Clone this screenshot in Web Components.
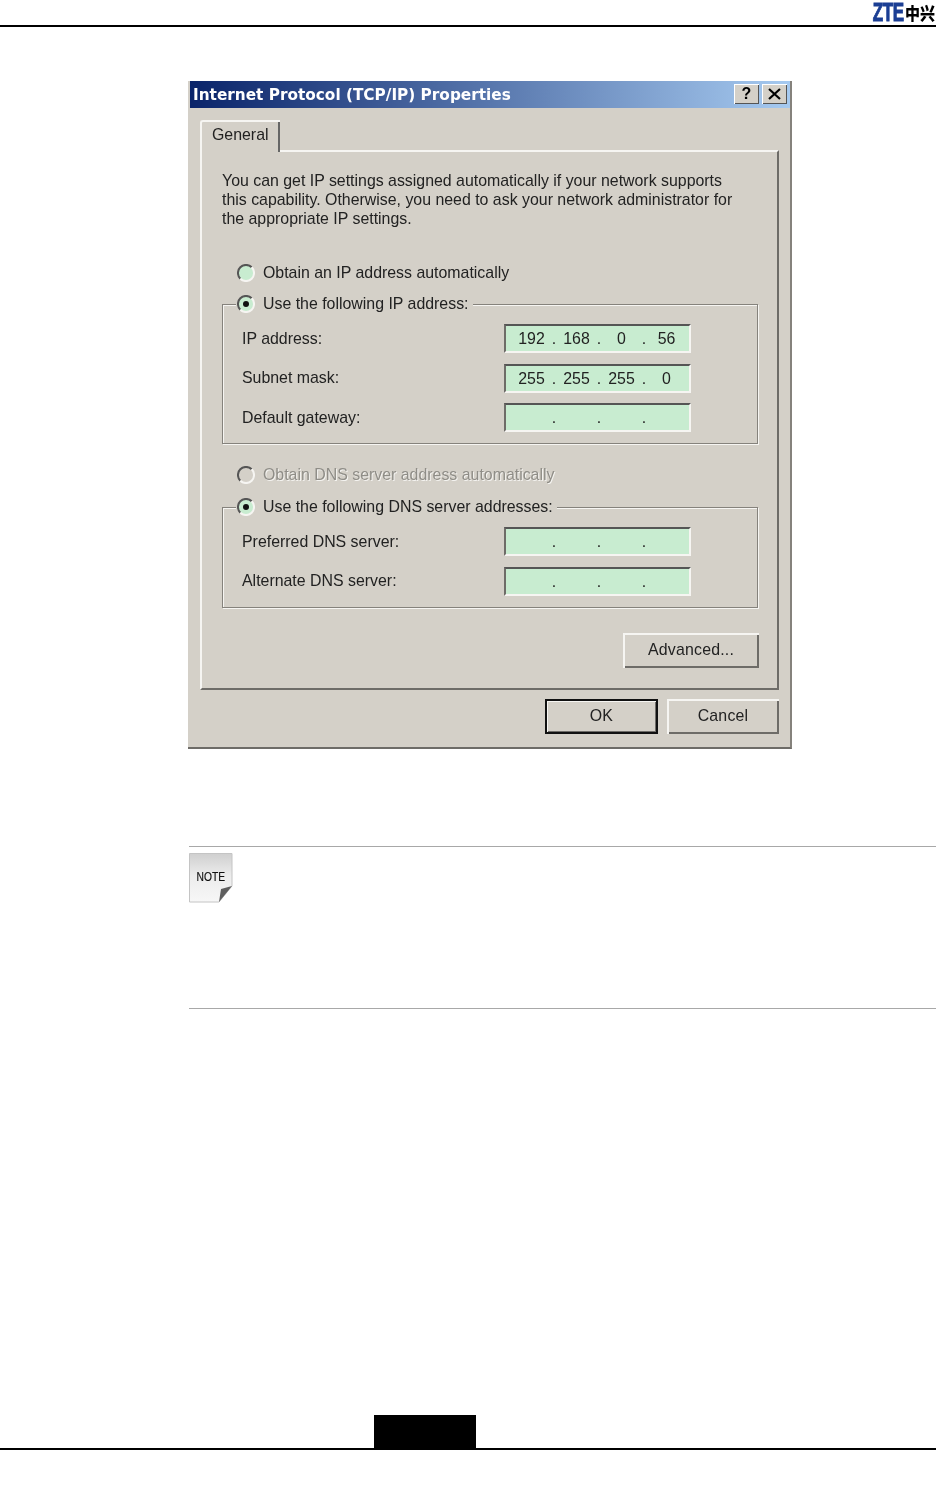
<!DOCTYPE html>
<html lang="en">
<head>
<meta charset="utf-8">
<title>Internet Protocol (TCP/IP) Properties</title>
<style>
    html, body { margin: 0; background: #fff; }
    body { font-family: "Liberation Sans", Arial, sans-serif; color: #222; }
</style>
</head>
<body>
<doc-header></doc-header>

<win-dialog heading="Internet Protocol (TCP/IP) Properties">
    <win-tabpanel tab="General">
        <div style="line-height:19px;padding-top:19px;height:58px;white-space:nowrap">You can get IP settings assigned automatically if your network supports<br>this capability. Otherwise, you need to ask your network administrator for<br>the appropriate IP settings.</div>
        <win-radio style="margin-top:33px;margin-left:15px">Obtain an IP address automatically</win-radio>
        <win-group style="margin-top:9px">
            <win-radio slot="legend" checked>Use the following IP address:</win-radio>
            <ip-row label="IP address:" value="192,168,0,56"></ip-row>
            <ip-row label="Subnet mask:" value="255,255,255,0"></ip-row>
            <ip-row label="Default gateway:"></ip-row>
        </win-group>
        <win-radio style="margin-top:20px;margin-left:15px" disabled>Obtain DNS server address automatically</win-radio>
        <win-group style="margin-top:10px">
            <win-radio slot="legend" checked>Use the following DNS server addresses:</win-radio>
            <ip-row label="Preferred DNS server:"></ip-row>
            <ip-row label="Alternate DNS server:"></ip-row>
        </win-group>
        <div style="display:flex;justify-content:flex-end;margin:25px -1px 0 0">
            <win-button style="width:136px">Advanced...</win-button>
        </div>
    </win-tabpanel>
    <win-button slot="actions" style="width:113px" primary>OK</win-button>
    <win-button slot="actions" style="width:112px">Cancel</win-button>
</win-dialog>

<note-block></note-block>
<doc-footer></doc-footer>

<script>
// Small helper, every component below just sets its markup in the constructor
class ShadowElement extends HTMLElement {
    constructor(markup) {
        super();
        this.attachShadow({ mode: 'open' });
        this.shadowRoot.innerHTML = markup;
    }
}

class DocHeader extends ShadowElement {
    constructor() {
        super(`
            <style>
                :host { display: block; height: 27px; box-sizing: border-box; border-bottom: 2px solid #000; }
                .logo { display: flex; justify-content: flex-end; align-items: flex-end; height: 25px; padding-right: 1px; filter: blur(.3px); }
                .zte {
                    font: bold 25px/25px "Liberation Sans", sans-serif; color: #1c3f94;
                    display: inline-block; transform: scaleX(.68); transform-origin: right center;
                    margin-right: 1px; -webkit-text-stroke: 1px #1c3f94; letter-spacing: -.5px;
                }
                .cn {
                    font: 900 15px/21px "Noto Sans CJK SC", sans-serif; color: #000; width: 30px; white-space: nowrap;
                    transform: scaleY(1.15); transform-origin: center bottom;
                }
            </style>
            <div class="logo"><span class="zte">ZTE</span><span class="cn">中兴</span></div>
        `);
    }
}

class WinDialog extends ShadowElement {
    constructor() {
        super(`
            <style>
                :host {
                    display: block; box-sizing: border-box; width: 604px; margin: 54px 0 0 188px;
                    padding-left: 2px; background: #d4d0c8; filter: blur(.35px);
                    border-right: 2px solid #85827c; border-bottom: 2px solid #6e6c68;
                }
                .title {
                    height: 27px; display: flex; align-items: center; justify-content: space-between;
                    padding: 0 3px 0 3px; box-sizing: border-box;
                    background: linear-gradient(90deg, #0a246a, #a6caf0);
                }
                .title span { font: bold 15.3px "DejaVu Sans", sans-serif; color: #fff; white-space: nowrap; }
                .caption { display: flex; gap: 3px; margin-bottom: 1px; }
                .caption b {
                    width: 25px; height: 20px; box-sizing: border-box; display: flex; align-items: center; justify-content: center;
                    background: #d4d0c8; box-shadow: inset 1px 1px #fff, inset -1px -1px #555;
                    color: #000; font: bold 16px "Liberation Sans", sans-serif;
                }
                .body { padding: 12px 11px 0 10px; }
                .actions { display: flex; justify-content: flex-end; gap: 9px; margin-top: 9px; padding-bottom: 13px; }
            </style>
            <div class="title"><span id="heading"></span><div class="caption"><b>?</b>
                <b><svg width="13" height="12" viewBox="0 0 13 12"><path d="M1 1l11 10M12 1L1 11" stroke="#000" stroke-width="2.2" fill="none"/></svg></b></div></div>
            <div class="body">
                <slot></slot>
                <div class="actions"><slot name="actions"></slot></div>
            </div>
        `);
    }
    connectedCallback() {
        this.shadowRoot.querySelector('#heading').textContent = this.getAttribute('heading');
    }
}

class WinTabpanel extends ShadowElement {
    constructor() {
        super(`
            <style>
                :host { display: block; font-size: 15.9px; color: #222; }
                .tab {
                    position: relative; z-index: 1; box-sizing: border-box; width: 80px; height: 32px; margin-bottom: -2px;
                    padding: 3px 0 0 10px; background: #d4d0c8; line-height: 19px;
                    border: solid #f6f5f2; border-width: 2px 0 0 2px; border-radius: 3px 0 0 0;
                    box-shadow: inset -2px 0 #666;
                }
                .panel {
                    box-sizing: border-box; padding: 0 19px 20px 20px;
                    border: 2px solid; border-color: #f6f5f2 #6e6c68 #6e6c68 #f6f5f2;
                }
            </style>
            <div class="tab" id="tab"></div>
            <div class="panel"><slot></slot></div>
        `);
    }
    connectedCallback() {
        this.shadowRoot.querySelector('#tab').textContent = this.getAttribute('tab');
    }
}

class WinRadio extends ShadowElement {
    constructor() {
        super(`
            <style>
                :host { display: flex; align-items: center; gap: 8px; height: 22px; white-space: nowrap; }
                :host([disabled]) { color: #8f8d87; text-shadow: 1px 1px #f4f3f0; }
                svg { flex: none; }
                .dot { display: none; }
                :host([checked]) .dot { display: block; }
                .face { fill: #c8ecd0; }
                :host([disabled]) .face { fill: #d4d0c8; }
            </style>
            <svg width="18" height="18" viewBox="0 0 18 18">
                <circle class="face" cx="9" cy="9" r="7.5"/>
                <path d="M3.3 14.7A8 8 0 0 1 14.7 3.3" fill="none" stroke="#555" stroke-width="2"/>
                <path d="M3.3 14.7A8 8 0 0 0 14.7 3.3" fill="none" stroke="#f6f5f2" stroke-width="2"/>
                <circle class="dot" cx="9" cy="9" r="3" fill="#111"/>
            </svg>
            <slot></slot>
        `);
    }
}

class WinGroup extends ShadowElement {
    constructor() {
        super(`
            <style>
                :host { display: block; }
                fieldset {
                    margin: 0; padding: 9px 0 11px 19px; min-width: 0;
                    border: 1px solid #85827c; box-shadow: inset 1px 1px #f6f5f2, 1px 1px #f6f5f2;
                }
                legend { margin-left: -6px; padding: 0 4px 0 1px; background: #d4d0c8; }
                .rows { display: grid; row-gap: 10.5px; }
            </style>
            <fieldset>
                <legend><slot name="legend"></slot></legend>
                <div class="rows"><slot></slot></div>
            </fieldset>
        `);
    }
}

class IpRow extends ShadowElement {
    constructor() {
        super(`
            <style>
                :host { display: grid; grid-template-columns: 262px 187px; align-items: center; height: 29px; }
                .field {
                    box-sizing: border-box; height: 29px; display: flex; padding: 0 0 0 4px;
                    background: #c8ecd0; line-height: 26px;
                    border: 2px solid; border-color: #555 #f6f5f2 #f6f5f2 #6e6c68;
                }
                .octet { width: 43px; text-align: center; }
                .dot { width: 2px; display: flex; justify-content: center; }
            </style>
            <span id="label"></span>
            <div class="field" id="field"></div>
        `);
    }
    connectedCallback() {
        this.shadowRoot.querySelector('#label').textContent = this.getAttribute('label');
        const parts = (this.getAttribute('value') || ',,,').split(',');
        this.shadowRoot.querySelector('#field').innerHTML = parts
            .map(p => `<span class="octet">${p}</span>`)
            .join('<span class="dot">.</span>');
    }
}

class WinButton extends ShadowElement {
    constructor() {
        super(`
            <style>
                :host {
                    display: flex; align-items: center; justify-content: center; box-sizing: border-box; height: 35px;
                    background: #d4d0c8; font-size: 15.9px; color: #222; letter-spacing: .2px;
                    box-shadow: inset 2px 2px #f6f5f2, inset -2px -2px #6e6c68;
                }
                :host([primary]) { box-shadow: inset 0 0 0 2px #111, inset 3px 3px #f6f5f2, inset -3px -3px #6e6c68; }
            </style>
            <slot></slot>
        `);
    }
}

class NoteBlock extends ShadowElement {
    constructor() {
        super(`
            <style>
                :host {
                    display: block; box-sizing: border-box; height: 163px; margin: 97px 0 0 189px; padding-top: 6px;
                    border-top: 1px solid #a8a8a8; border-bottom: 1px solid #a8a8a8;
                }
                svg { display: block; filter: blur(.4px); }
            </style>
            <svg width="45" height="50" viewBox="0 0 45 50">
                <defs><linearGradient id="paper" x1="0" y1="0" x2="0" y2="1">
                    <stop offset="0" stop-color="#cfcfcf"/><stop offset=".45" stop-color="#ececec"/><stop offset="1" stop-color="#f7f7f7"/>
                </linearGradient></defs>
                <path d="M.5.5H43V33L30 49H.5Z" fill="url(#paper)" stroke="#c4c4c4"/>
                <path d="M30 49L32 36L43 33Z" fill="#5f5f5f"/>
                <text x="7.5" y="27.5" font-family="Liberation Sans, sans-serif" font-size="13" fill="#111" stroke="#111" stroke-width=".2" textLength="28.5" lengthAdjust="spacingAndGlyphs">NOTE</text>
            </svg>
        `);
    }
}

class DocFooter extends ShadowElement {
    constructor() {
        super(`
            <style>
                :host { display: block; margin-top: 406px; border-bottom: 2px solid #000; }
                .tab { width: 102px; height: 33px; margin-left: 374px; background: #000; }
            </style>
            <div class="tab"></div>
        `);
    }
}

customElements.define('doc-header', DocHeader);
customElements.define('win-dialog', WinDialog);
customElements.define('win-tabpanel', WinTabpanel);
customElements.define('win-radio', WinRadio);
customElements.define('win-group', WinGroup);
customElements.define('ip-row', IpRow);
customElements.define('win-button', WinButton);
customElements.define('note-block', NoteBlock);
customElements.define('doc-footer', DocFooter);
</script>
</body>
</html>
